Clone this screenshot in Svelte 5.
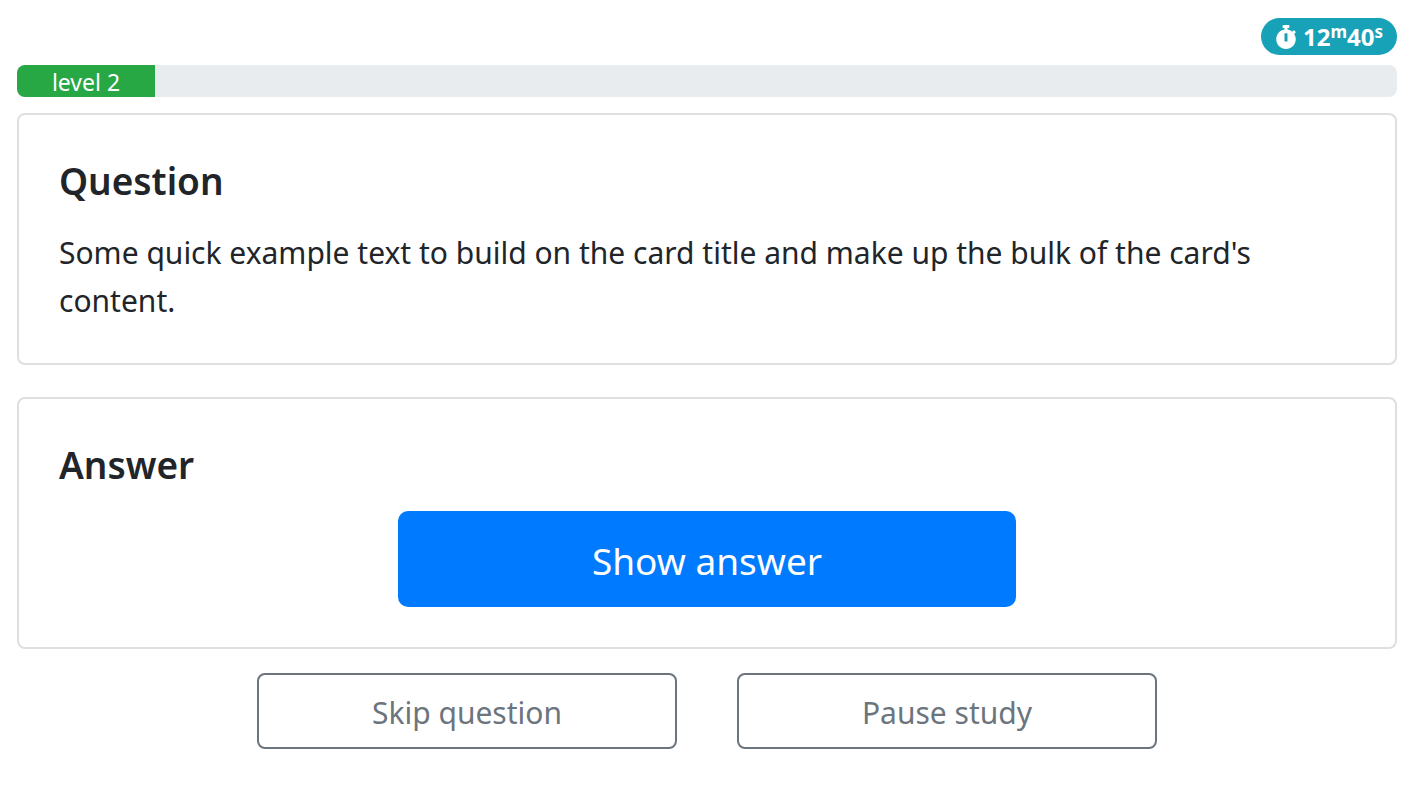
<script>
  const minutes = 12;
  const seconds = 40;
  const level = 2;
  const progress = 10;
</script>

<main>
  <div class="status">
    <span class="timer">
      <svg viewBox="0 0 448 512" aria-hidden="true">
        <path fill="currentColor" d="M432 304c0 114.900-93.100 208-208 208S16 418.900 16 304c0-104 76.300-190.200 176-205.500V64h-28c-6.600 0-12-5.400-12-12V12c0-6.600 5.400-12 12-12h120c6.600 0 12 5.400 12 12v40c0 6.600-5.400 12-12 12h-28v34.500c37.500 5.800 71.700 21.600 99.700 44.600l27.500-27.500c4.700-4.700 12.300-4.700 17 0l28.300 28.300c4.700 4.700 4.700 12.300 0 17l-29.400 29.400-.6.600C419.700 223.300 432 262.200 432 304zm-176 36V188.500c0-6.600-5.400-12-12-12h-40c-6.600 0-12 5.400-12 12V340c0 6.600 5.400 12 12 12h40c6.600 0 12-5.400 12-12z" />
      </svg>
      <span>{minutes}<sup>m</sup>{seconds}<sup>s</sup></span>
    </span>
  </div>

  <div class="progress" role="progressbar" aria-label="Study progress" aria-valuenow={progress} aria-valuemin="0" aria-valuemax="100">
    <div class="bar" style="width: {progress}%">level {level}</div>
  </div>

  <section class="card question">
    <h1>Question</h1>
    <p>Some quick example text to build on the card title and make up the bulk of the card's content.</p>
  </section>

  <section class="card answer">
    <h1>Answer</h1>
    <button class="show" type="button">Show answer</button>
  </section>

  <div class="actions">
    <button type="button">Skip question</button>
    <button type="button">Pause study</button>
  </div>
</main>

<style>
  :global(body) {
    margin: 0;
    background: #fff;
  }

  main,
  main * {
    box-sizing: border-box;
  }

  main {
    padding: 18px 28px 24px 17px;
    color: #212529;
    font-family: "Segoe UI", "Noto Sans", "Open Sans", sans-serif;
    font-size: 30px;
    line-height: 48px;
  }

  .status {
    display: flex;
    justify-content: flex-end;
    margin-bottom: 10px;
  }

  .timer {
    display: flex;
    align-items: center;
    gap: 6px;
    height: 37px;
    padding: 0 14px;
    border-radius: 20px;
    background: #17a2b8;
    color: #fff;
    font-size: 24px;
    font-weight: 700;
    line-height: 24px;
  }

  .timer svg {
    width: 22px;
    height: 24px;
  }

  sup {
    position: relative;
    top: -8px;
    font-size: 17px;
    line-height: 0;
    vertical-align: baseline;
  }

  .progress {
    height: 32px;
    margin-bottom: 16px;
    border-radius: 8px;
    background: #e9ecef;
  }

  .bar {
    height: 100%;
    border-radius: 8px 0 0 8px;
    background: #28a745;
    color: #fff;
    font-size: 23px;
    line-height: 34px;
    text-align: center;
    white-space: nowrap;
  }

  .card {
    display: flex;
    flex-direction: column;
    padding: 42px 40px 38px;
    border: 2px solid #dfdfdf;
    border-radius: 8px;
  }

  .question {
    margin-bottom: 32px;
  }

  h1 {
    margin: 0 0 24px;
    font-size: 37px;
    font-weight: 600;
    line-height: 48px;
  }

  p {
    margin: 0;
  }

  button {
    border: 2px solid #6c757d;
    border-radius: 8px;
    background: transparent;
    color: #6c757d;
    font: inherit;
    cursor: pointer;
  }

  .answer {
    padding-bottom: 40px;
  }

  .answer h1 {
    margin-bottom: 22px;
  }

  .show {
    width: calc(50% - 30px);
    padding: 18px 32px 14px;
    align-self: center;
    border-color: #007bff;
    border-radius: 10px;
    background: #007bff;
    color: #fff;
    font-size: 37px;
    line-height: 60px;
  }

  .actions {
    display: flex;
    justify-content: center;
    gap: 60px;
    margin-top: 24px;
  }

  .actions button {
    width: 420px;
    padding: 14px 24px 10px;
  }
</style>
